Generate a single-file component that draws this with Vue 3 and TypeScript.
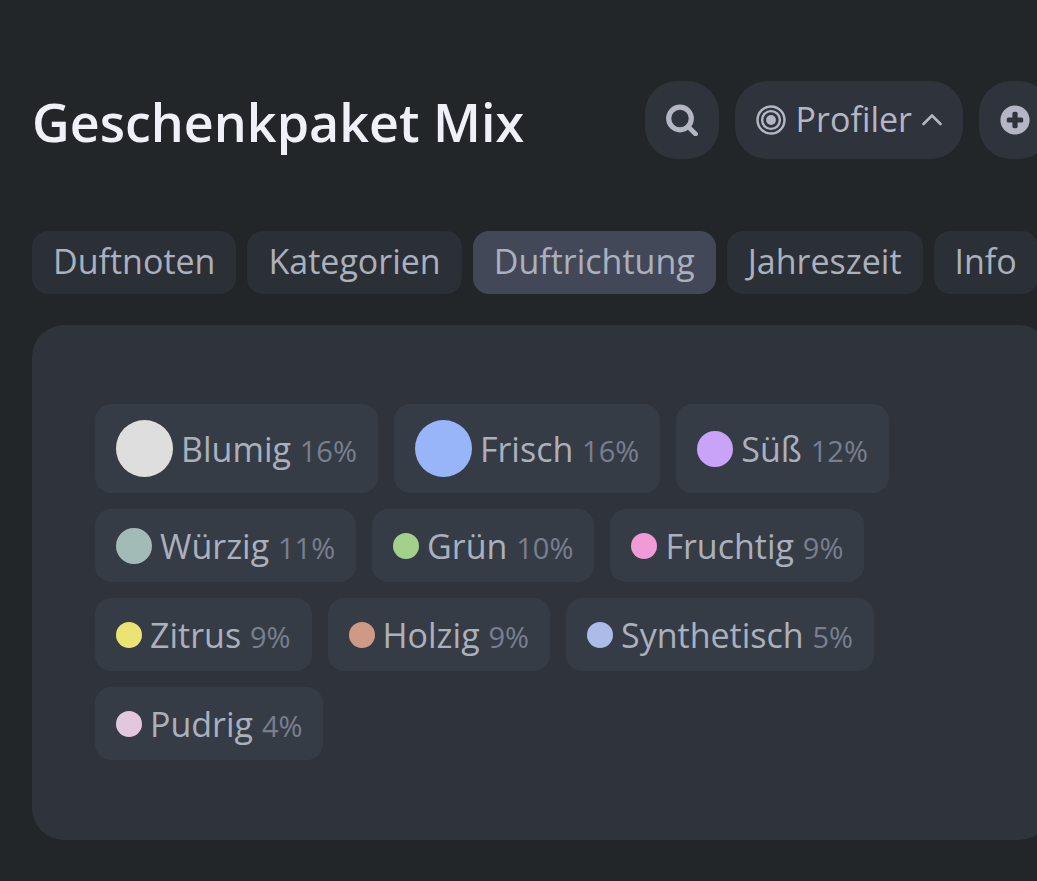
<script setup lang="ts">
import { ref } from 'vue'

interface Scent {
  name: string
  share: number
  color: string
  size: 'large' | 'medium' | 'small'
}

const tabs: string[] = ['Duftnoten', 'Kategorien', 'Duftrichtung', 'Jahreszeit', 'Info']
const activeTab = ref('Duftrichtung')

const scents: Scent[] = [
  { name: 'Blumig', share: 16, color: '#dedede', size: 'large' },
  { name: 'Frisch', share: 16, color: '#98b5f9', size: 'large' },
  { name: 'Süß', share: 12, color: '#c9a3f8', size: 'medium' },
  { name: 'Würzig', share: 11, color: '#a2bbb7', size: 'medium' },
  { name: 'Grün', share: 10, color: '#a3d18b', size: 'small' },
  { name: 'Fruchtig', share: 9, color: '#f09ad6', size: 'small' },
  { name: 'Zitrus', share: 9, color: '#ebe374', size: 'small' },
  { name: 'Holzig', share: 9, color: '#cf9a85', size: 'small' },
  { name: 'Synthetisch', share: 5, color: '#acbbe8', size: 'small' },
  { name: 'Pudrig', share: 4, color: '#e2c7df', size: 'small' },
]
</script>

<template>
  <main class="page">
    <header class="header">
      <h1 class="title">Geschenkpaket Mix</h1>
      <div class="actions">
        <button class="action" type="button" aria-label="Suchen">
          <svg class="icon search" viewBox="0 0 32 32" aria-hidden="true">
            <circle cx="14" cy="14.500" r="11.3" fill="none" stroke="currentColor" stroke-width="5.2" />
            <path d="M22 22.500 29.6 30" stroke="currentColor" stroke-width="4.6" stroke-linecap="round" />
          </svg>
        </button>
        <button class="action" type="button" aria-expanded="true">
          <svg class="icon" viewBox="0 0 30 30" fill="none" stroke="currentColor" stroke-width="2.4" aria-hidden="true">
            <circle cx="15" cy="15" r="13.5" />
            <circle cx="15" cy="15" r="8.9" />
            <circle cx="15" cy="15" r="4.9" fill="currentColor" stroke="none" />
          </svg>
          <span class="action-text">Profiler</span>
          <svg class="chevron" viewBox="0 0 20 30" fill="none" stroke="currentColor" stroke-width="2.6" stroke-linecap="round" stroke-linejoin="round" aria-hidden="true">
            <path d="M1.5 19 10 10.5 18.5 19" />
          </svg>
        </button>
        <button class="action" type="button" aria-label="Hinzufügen">
          <svg class="icon" viewBox="0 0 30 30" aria-hidden="true">
            <circle cx="15" cy="15" r="14.6" fill="currentColor" />
            <rect class="plus" x="12.4" y="6.8" width="5.2" height="16.4" rx="1.6" />
            <rect class="plus" x="6.8" y="12.4" width="16.4" height="5.2" rx="1.6" />
          </svg>
        </button>
      </div>
    </header>

    <nav class="tabs" role="tablist">
      <button
        v-for="tab in tabs"
        :key="tab"
        class="tab"
        :class="{ active: tab === activeTab }"
        type="button"
        role="tab"
        :aria-selected="tab === activeTab"
        @click="activeTab = tab"
      >{{ tab }}</button>
    </nav>

    <section class="card">
      <ul class="scents">
        <li v-for="scent in scents" :key="scent.name" class="scent">
          <span class="dot" :class="scent.size" :style="{ backgroundColor: scent.color }"></span>
          <span class="label">{{ scent.name }} <small class="share">{{ scent.share }}%</small></span>
        </li>
      </ul>
    </section>
  </main>
</template>

<style>
body {
  background: #222628;
}
</style>

<style scoped>
.page {
  box-sizing: border-box;
  min-height: 100vh;
  padding: 81px 0 41px 32px;
  overflow: hidden;
  background: #222628;
  color: #abb0bd;
  font-family: "Open Sans", "Noto Sans", sans-serif;
  font-size: 34px;
  line-height: 41px;
}

.header,
.tabs,
.card {
  margin-right: -14px;
}

.header {
  display: flex;
  align-items: center;
  justify-content: space-between;
  margin-bottom: 72px;
}

.title {
  margin: 0;
  padding-top: 4px;
  color: #f0f1f8;
  font-size: 52px;
  font-weight: 600;
  line-height: 74px;
  white-space: nowrap;
}

.actions {
  display: flex;
  gap: 16px;
}

.action {
  display: flex;
  flex: none;
  align-items: center;
  gap: 10px;
  height: 78px;
  padding: 0 21px;
  border: 0;
  border-radius: 32px;
  background: #2f333b;
  color: #b4b6c5;
  font: inherit;
  cursor: pointer;
}

.action-text {
  padding-bottom: 2px;
}

.icon {
  width: 30px;
  height: 30px;
}

.search {
  width: 32px;
  height: 32px;
}

.chevron {
  width: 20px;
  height: 30px;
}

.plus {
  fill: #2f333b;
}

.tabs {
  display: flex;
  gap: 11px;
  margin-bottom: 31px;
}

.tab {
  flex: none;
  padding: 10px 21px 12px;
  border: 0;
  border-radius: 16px;
  background: #2b2f36;
  color: inherit;
  font: inherit;
  cursor: pointer;
}

.tab.active {
  background: #434859;
}

.card {
  padding: 79px 63px 80px;
  border-radius: 32px;
  background: #2f333b;
}

.scents {
  display: flex;
  flex-wrap: wrap;
  gap: 16px;
  margin: 0;
  padding: 0;
  list-style: none;
}

.scent {
  display: flex;
  align-items: center;
  gap: 8px;
  padding: 16px 21px;
  border-radius: 16px;
  background: #363c45;
}

.dot {
  flex: none;
  border-radius: 50%;
}

.dot.large {
  width: 57px;
  height: 57px;
}

.dot.medium {
  width: 36px;
  height: 36px;
}

.dot.small {
  width: 26px;
  height: 26px;
}

.label {
  padding-top: 2px;
  line-height: 39px;
}

.share {
  color: #787f90;
  font-size: 29px;
  line-height: 1;
}
</style>
